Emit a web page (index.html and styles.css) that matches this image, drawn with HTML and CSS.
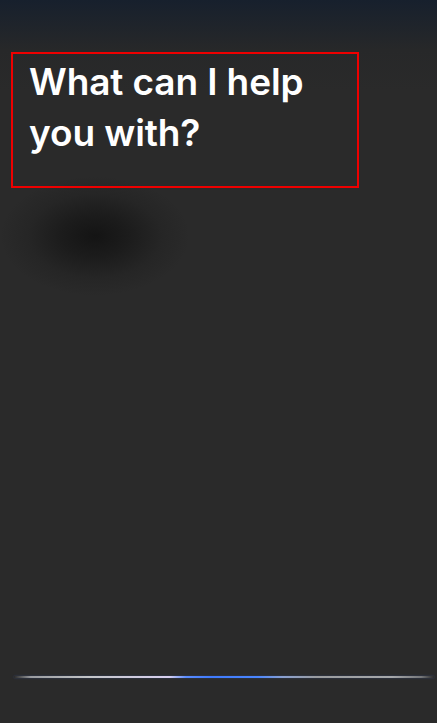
FILE: index.html
```html
<!DOCTYPE html>
<html lang="en">
<head>
    <meta charset="UTF-8">
    <meta name="viewport" content="width=device-width, initial-scale=1.0">
    <title>Siri</title>
    <link rel="stylesheet" href="styles.css">
</head>
<body>
    <div class="screen">
        <!-- 提示语 -->
        <div class="prompt-box">
            <div class="prompt">What can I help you with?</div>
        </div>

        <div class="spacer"></div>

        <!-- 底部波形线 -->
        <div class="wave">
            <div class="wave-line"></div>
        </div>
    </div>
</body>
</html>
```

FILE: styles.css
```css
html, body {
    margin: 0;
    padding: 0;
    height: 100%;
}

body {
    font-family: Inter, "Liberation Sans", sans-serif;
    background-color: #2a2a2a;
    background-image:
        radial-gradient(ellipse 95px 60px at 95px 236px, rgba(16, 16, 16, 0.85), rgba(16, 16, 16, 0.55) 35%, rgba(20, 20, 20, 0.2) 70%, rgba(20, 20, 20, 0) 100%),
        linear-gradient(to bottom, #17202d 0px, #1f242b 25px, #272829 50px, #2a2a2a 90px, #2a2a2a 100%);
    background-repeat: no-repeat;
}

.screen {
    display: flex;
    flex-direction: column;
    height: 100vh;
    box-sizing: border-box;
    padding: 52px 0 0 11px;
}

.prompt-box {
    width: 344px;
    height: 132px;
    border: 2px solid #ee0000;
}

.prompt {
    color: #ffffff;
    font-size: 37px;
    font-weight: 600;
    line-height: 51px;
    letter-spacing: -0.1px;
    padding: 2px 0 0 16px;
    width: 310px;
}

.spacer {
    flex: 1;
}

.wave {
    display: flex;
    justify-content: center;
    padding: 0 3px;
    margin-bottom: 45px;
}

.wave-line {
    width: 100%;
    height: 2px;
    background: linear-gradient(to right,
        rgba(120, 120, 120, 0) 0%,
        #9a9ca0 4%,
        #c4c6c9 18%,
        #d8d0f0 37%,
        #5a8cff 41%,
        #3f7bff 47%,
        #4a86ff 58%,
        #8aa0d0 64%,
        #9a9c9f 72%,
        #a6a8ab 90%,
        #75777a 97%,
        rgba(100, 100, 100, 0) 100%);
    box-shadow: 0 0 2px rgba(80, 130, 255, 0.3);
}
```
